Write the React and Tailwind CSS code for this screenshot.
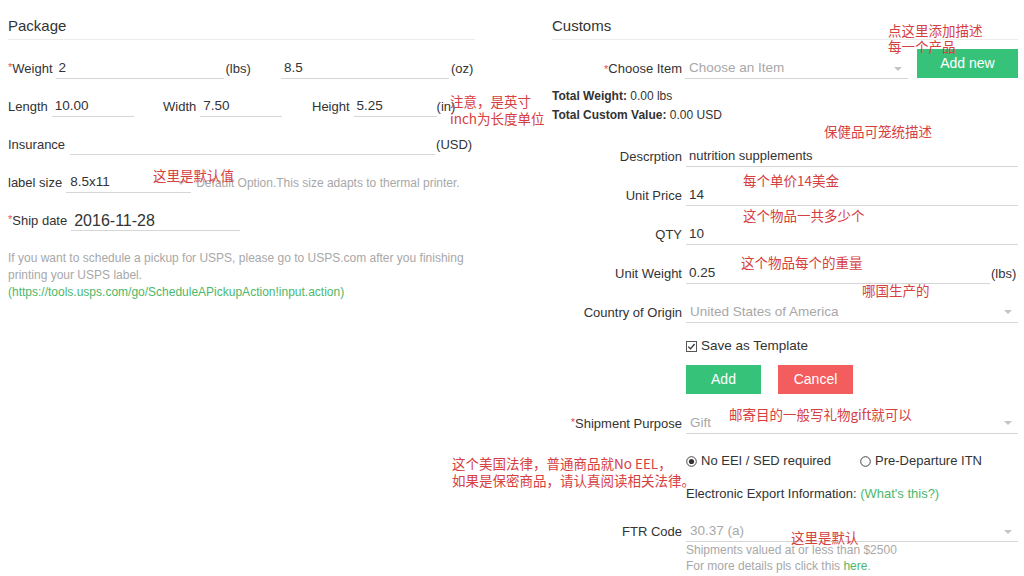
import React from "react"

const font = { fontFamily: '"Liberation Sans", Arial, "Noto Sans CJK SC", sans-serif' }

const Arrow = () => (
  <span className="w-0 h-0 border-l-[4px] border-r-[4px] border-t-[4px] border-l-transparent border-r-transparent border-t-[#c4c4c4]" />
)

const Input = ({ value, className = "", big = false }) => (
  <div className={`h-[20px] border-b border-[#d6d6d6] flex items-center pl-[3px] text-[#333] ${big ? "text-[16px]" : "text-[13.5px]"} ${className}`}>
    {value}
  </div>
)

const Select = ({ value, placeholder, className = "" }) => (
  <div className={`h-[20px] border-b border-[#d6d6d6] flex items-center justify-between pl-[4px] pr-[6px] ${className}`}>
    <span className={placeholder ? "text-[#a8a8a8] text-[13.5px]" : "text-[#333] text-[13.5px]"}>{value}</span>
    <Arrow />
  </div>
)

const Req = () => <span className="text-[#e05050] text-[11px] align-top">*</span>

const Note = ({ children, className }) => (
  <div className={`absolute text-[#d6403f] text-[13.5px] whitespace-nowrap ${className}`} style={{ fontFamily: '"Noto Sans CJK SC", sans-serif' }}>
    {children}
  </div>
)

const Row = ({ label, children, req }) => (
  <div className="h-[39px] flex items-center">
    <div className="w-[130px] text-right text-[13px] text-[#333]">
      {req && <Req />}
      {label}
    </div>
    <div className="ml-[4px] flex-1 flex items-center">{children}</div>
  </div>
)

export default function App() {
  return (
    <div className="relative w-[1024px] h-[576px] bg-white overflow-hidden" style={font}>
      <div className="flex pl-[8px] pr-[6px]">
        {/* Package */}
        <div className="w-[467px]">
          <div className="pt-[16px] pb-[3px] leading-[20px] text-[15px] text-[#333] border-b border-[#ececec]">Package</div>

          <div className="mt-[10px] h-[38px] flex items-center text-[13px] text-[#333]">
            <div className="w-[273px] flex items-center">
              <span><Req />Weight</span>
              <Input value="2" className="ml-[3px] w-[168px]" />
              <span className="ml-[2px]">(lbs)</span>
            </div>
            <Input value="8.5" className="w-[168px]" />
            <span className="ml-[2px]">(oz)</span>
          </div>

          <div className="h-[38px] flex items-center text-[13px] text-[#333]">
            <div className="w-[155px] flex items-center">
              <span>Length</span>
              <Input value="10.00" className="ml-[4px] w-[82px]" />
            </div>
            <div className="w-[149px] flex items-center">
              <span>Width</span>
              <Input value="7.50" className="ml-[4px] w-[82px]" />
            </div>
            <span>Height</span>
            <Input value="5.25" className="ml-[4px] w-[83px]" />
            <span>(in)</span>
          </div>

          <div className="h-[38px] flex items-center text-[13px] text-[#333]">
            <span>Insurance</span>
            <Input value="" className="ml-[5px] w-[365px]" />
            <span className="ml-[1px]">(USD)</span>
          </div>

          <div className="h-[38px] flex items-center text-[13px] text-[#333]">
            <span>label size</span>
            <Select value="8.5x11" className="ml-[4px] w-[125px]" />
            <span className="ml-[5px] text-[12px] text-[#a8a8a8]">Default Option.This size adapts to thermal printer.</span>
          </div>

          <div className="h-[38px] flex items-center text-[13px] text-[#333]">
            <span><Req />Ship date</span>
            <Input value="2016-11-28" big className="ml-[4px] w-[169px]" />
          </div>

          <div className="mt-[10px] text-[12px] leading-[17px] text-[#a8a8a8]">
            If you want to schedule a pickup for USPS, please go to USPS.com after you finishing<br />
            printing your USPS label.<br />
            <span className="text-[#4db86a]">(https://tools.usps.com/go/ScheduleAPickupAction!input.action)</span>
          </div>
        </div>

        {/* Customs */}
        <div className="ml-auto w-[466px]">
          <div className="pt-[16px] pb-[3px] leading-[20px] text-[15px] text-[#333] border-b border-[#ececec]">Customs</div>

          <div className="mt-[9px] h-[30px] flex items-end">
            <div className="w-[130px] h-[20px] flex items-center justify-end text-[13px] text-[#333]">
              <Req />Choose Item
            </div>
            <Select value="Choose an Item" placeholder className="ml-[3px] w-[223px]" />
            <button className="ml-[9px] w-[101px] h-[29px] bg-[#37c27a] text-white text-[14px] mb-[1px]">Add new</button>
          </div>

          <div className="mt-[8px] text-[12px] leading-[19px] text-[#333]">
            <div><b>Total Weight:</b> 0.00 lbs</div>
            <div><b>Total Custom Value:</b> 0.00 USD</div>
          </div>

          <div className="mt-[12px]">
            <Row label="Descrption"><Input value="nutrition supplements" className="flex-1 text-[13px]" /></Row>
            <Row label="Unit Price"><Input value="14" className="flex-1" /></Row>
            <Row label="QTY"><Input value="10" className="flex-1" /></Row>
            <Row label="Unit Weight">
              <Input value="0.25" className="w-[304px]" />
              <span className="ml-[1px] text-[13px] text-[#333]">(lbs)</span>
            </Row>
            <Row label="Country of Origin"><Select value="United States of America" placeholder className="flex-1" /></Row>
          </div>

          <div className="h-[28px] pl-[134px] flex items-center text-[13.5px] text-[#333]">
            <svg width="11" height="11" viewBox="0 0 11 11">
              <rect x="0.5" y="0.5" width="10" height="10" fill="white" stroke="#555" />
              <polyline points="2.3,5.6 4.5,7.8 8.6,3" fill="none" stroke="#333" strokeWidth="1.3" />
            </svg>
            <span className="ml-[4px]">Save as Template</span>
          </div>

          <div className="mt-[5px] pl-[134px] flex gap-[17px]">
            <button className="w-[75px] h-[29px] bg-[#37c27a] text-white text-[14px]">Add</button>
            <button className="w-[75px] h-[29px] bg-[#f45d5d] text-white text-[14px]">Cancel</button>
          </div>

          <div className="mt-[10px]">
            <Row label="Shipment Purpose" req><Select value="Gift" placeholder className="flex-1" /></Row>
          </div>

          <div className="h-[36px] pl-[134px] flex items-center text-[13px] text-[#333]">
            <svg width="11" height="11" viewBox="0 0 11 11">
              <circle cx="5.5" cy="5.5" r="4.8" fill="white" stroke="#444" />
              <circle cx="5.5" cy="5.5" r="2.6" fill="#333" />
            </svg>
            <span className="ml-[4px]">No EEI / SED required</span>
            <svg width="11" height="11" viewBox="0 0 11 11" className="ml-[29px]">
              <circle cx="5.5" cy="5.5" r="4.8" fill="white" stroke="#444" />
            </svg>
            <span className="ml-[4px]">Pre-Departure ITN</span>
          </div>

          <div className="h-[30px] pl-[134px] flex items-center text-[13px] text-[#333]">
            Electronic Export Information:&nbsp;<span className="text-[#4db86a]">(What's this?)</span>
          </div>

          <div className="mt-[13px] h-[20px] flex items-center">
            <div className="w-[130px] text-right text-[13px] text-[#333]">FTR Code</div>
            <Select value="30.37 (a)" placeholder className="ml-[4px] flex-1" />
          </div>

          <div className="pl-[134px] text-[12px] leading-[16px] text-[#a8a8a8]">
            <div>Shipments valued at or less than $2500</div>
            <div>For more details pls click this <span className="text-[#4db86a]">here</span>.</div>
          </div>
        </div>
      </div>

      {/* annotations */}
      <Note className="left-[888px] top-[22px] leading-[16px]">点这里添加描述<br />每一个产品</Note>
      <Note className="left-[450px] top-[93px] leading-[17px]">注意，是英寸<br />inch为长度单位</Note>
      <Note className="left-[153px] top-[167px] leading-[16px]">这里是默认值</Note>
      <Note className="left-[824px] top-[123px] leading-[16px]">保健品可笼统描述</Note>
      <Note className="left-[743px] top-[172px] leading-[16px]">每个单价14美金</Note>
      <Note className="left-[743px] top-[207px] leading-[16px]">这个物品一共多少个</Note>
      <Note className="left-[741px] top-[254px] leading-[16px]">这个物品每个的重量</Note>
      <Note className="left-[862px] top-[282px] leading-[16px]">哪国生产的</Note>
      <Note className="left-[729px] top-[406px] leading-[16px]">邮寄目的一般写礼物gift就可以</Note>
      <Note className="left-[452px] top-[455px] leading-[17px]">这个美国法律，普通商品就No EEL，<br />如果是保密商品，请认真阅读相关法律。</Note>
      <Note className="left-[791px] top-[529px] leading-[16px]">这里是默认</Note>
    </div>
  )
}
